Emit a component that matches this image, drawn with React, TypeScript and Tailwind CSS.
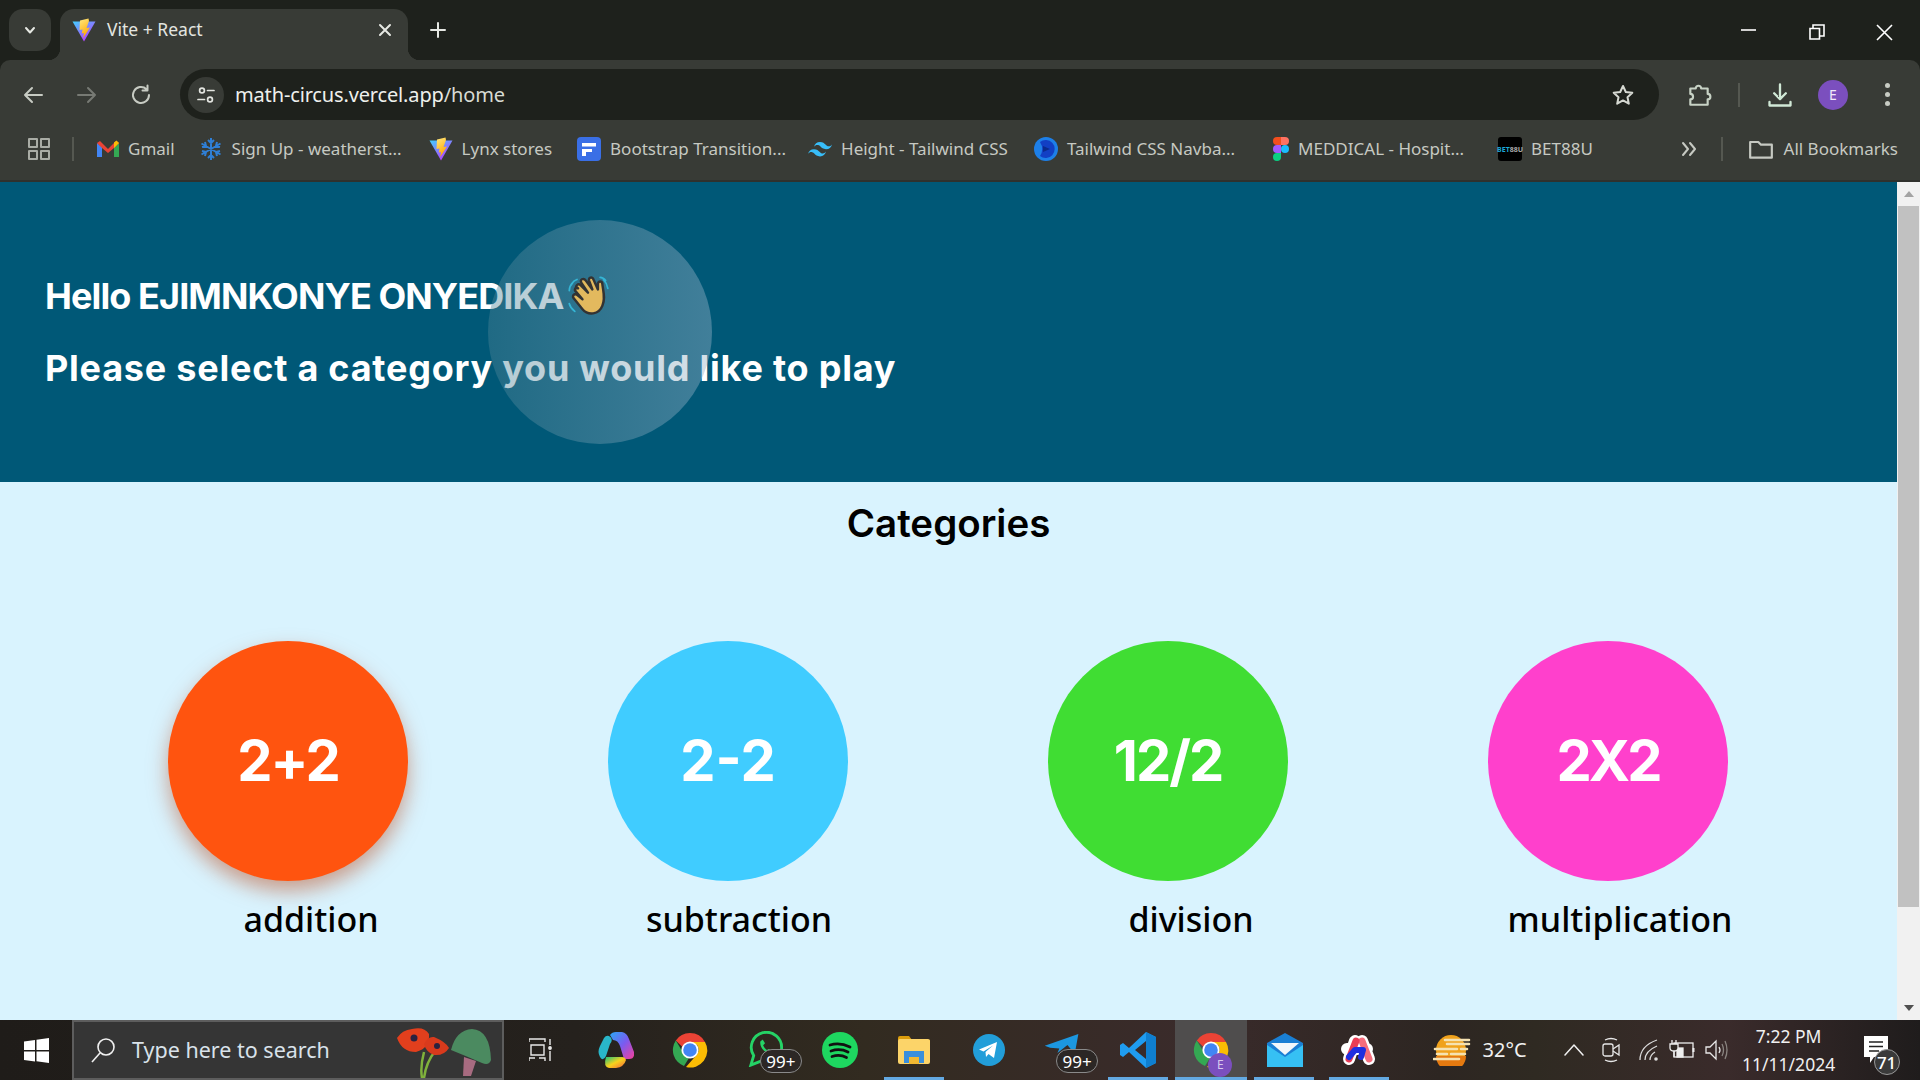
import React from "react";

const UI = "font-['Noto_Sans','Open_Sans',sans-serif]";
const HERO = "font-['Inter',sans-serif]";

function Vite({ size = 24 }: { size?: number }) {
  return (
    <svg width={size} height={size} viewBox="0 0 24 24" className="shrink-0">
      <defs>
        <linearGradient id="vg1" x1="0" y1="0" x2="0.7" y2="1">
          <stop offset="0" stopColor="#41d1ff" />
          <stop offset="1" stopColor="#bd34fe" />
        </linearGradient>
        <linearGradient id="vg2" x1="0" y1="0" x2="0.4" y2="1">
          <stop offset="0" stopColor="#ffea83" />
          <stop offset="1" stopColor="#ffa800" />
        </linearGradient>
      </defs>
      <path d="M0.5 3.5 L23.5 3.5 L12 23.5 Z" fill="url(#vg1)" />
      <path d="M16.5 0.5 L8 2.5 L7.5 12 L10.5 11.5 L9.8 15.5 L12 15 L11.2 20 L18 9.5 L14.5 10 L17 3 Z" fill="url(#vg2)" />
    </svg>
  );
}

function Chevron() {
  return (
    <svg width="14" height="14" viewBox="0 0 14 14" fill="none" stroke="#e6e8e3" strokeWidth="2" strokeLinecap="round" strokeLinejoin="round">
      <path d="M3 5 L7 9.5 L11 5" />
    </svg>
  );
}

function Stroke({ w = 24, h = 24, vb = "0 0 24 24", color = "#c7cbc3", sw = 2, children }: { w?: number; h?: number; vb?: string; color?: string; sw?: number; children: React.ReactNode }) {
  return (
    <svg width={w} height={h} viewBox={vb} fill="none" stroke={color} strokeWidth={sw} strokeLinecap="round" strokeLinejoin="round" className="shrink-0">
      {children}
    </svg>
  );
}

function ChromeLogo({ size = 36 }: { size?: number }) {
  return (
    <svg width={size} height={size} viewBox="0 0 36 36" className="shrink-0">
      <path d="M18 1 A17 17 0 0 1 33 10 L18 10 A8 8 0 0 0 10.5 15 L3.8 8.5 A17 17 0 0 1 18 1Z" fill="#ea4335" />
      <path d="M3.8 8.5 L11 20.5 A8 8 0 0 0 17 26 L12 34 A17 17 0 0 1 3.8 8.5Z" fill="#34a853" />
      <path d="M33 10 A17 17 0 0 1 14 35 L24.5 23 A8 8 0 0 0 25 13 L18 10Z" fill="#fbbc04" />
      <circle cx="18" cy="18" r="8.6" fill="#fff" />
      <circle cx="18" cy="18" r="6.8" fill="#4285f4" />
    </svg>
  );
}

function Gmail() {
  return (
    <svg width="22" height="18" viewBox="0 0 22 18" className="shrink-0">
      <path d="M0 3 L0 17 L5 17 L5 7Z" fill="#4285f4" />
      <path d="M22 3 L22 17 L17 17 L17 7Z" fill="#34a853" />
      <path d="M0 3 L3 1 L11 9 L19 1 L22 3 L17 8 L11 13 L5 8Z" fill="#ea4335" />
      <path d="M17 2.5 L19.5 0.6 L22 3 L17 8Z" fill="#fbbc04" />
    </svg>
  );
}

function Snow() {
  return (
    <svg width="24" height="24" viewBox="0 0 24 24" fill="none" stroke="#2f7fd6" strokeWidth="2" className="shrink-0">
      <path d="M12 1 V23 M2.5 6.5 L21.5 17.5 M2.5 17.5 L21.5 6.5 M9 3 L12 6 L15 3 M9 21 L12 18 L15 21 M3 10 L7 9 L6 5 M21 14 L17 15 L18 19 M3 14 L7 15 L6 19 M21 10 L17 9 L18 5" />
    </svg>
  );
}

function Bootstrap() {
  return (
    <svg width="24" height="24" viewBox="0 0 24 24" className="shrink-0">
      <rect width="24" height="24" rx="4" fill="#3a6fe6" />
      <path d="M5 6 H19 V9.5 H5Z M5 12 H15 V15 H9 V19 H5Z" fill="#fff" />
    </svg>
  );
}

function TailwindLogo() {
  return (
    <svg width="24" height="15" viewBox="0 0 24 15" fill="#38bdf8" className="shrink-0">
      <path d="M12 0 C8.8 0 6.8 1.6 6 4.8 C7.2 3.2 8.6 2.6 10.2 3 C11.1 3.2 11.8 3.9 12.5 4.6 C13.7 5.8 15 7.2 18 7.2 C21.2 7.2 23.2 5.6 24 2.4 C22.8 4 21.4 4.6 19.8 4.2 C18.9 4 18.2 3.3 17.5 2.6 C16.3 1.4 15 0 12 0Z" />
      <path d="M6 7.2 C2.8 7.2 0.8 8.8 0 12 C1.2 10.4 2.6 9.8 4.2 10.2 C5.1 10.4 5.8 11.1 6.5 11.8 C7.7 13 9 14.4 12 14.4 C15.2 14.4 17.2 12.8 18 9.6 C16.8 11.2 15.4 11.8 13.8 11.4 C12.9 11.2 12.2 10.5 11.5 9.8 C10.3 8.6 9 7.2 6 7.2Z" />
    </svg>
  );
}

function Navba() {
  return (
    <svg width="24" height="24" viewBox="0 0 24 24" className="shrink-0">
      <circle cx="12" cy="12" r="12" fill="#1d7fe8" />
      <path d="M6 5 A9 9 0 1 1 6 19 A13 13 0 0 0 6 5Z" fill="#123fc4" />
      <path d="M9 9 L16 12 L9 15Z" fill="#0b2a8c" />
    </svg>
  );
}

function Figma() {
  return (
    <svg width="16" height="24" viewBox="0 0 16 24" className="shrink-0">
      <path d="M8 0 H4 A4 4 0 0 0 4 8 H8Z" fill="#f24e1e" />
      <path d="M8 0 H12 A4 4 0 0 1 12 8 H8Z" fill="#ff7262" />
      <path d="M8 8 H4 A4 4 0 0 0 4 16 H8Z" fill="#a259ff" />
      <circle cx="12" cy="12" r="4" fill="#1abcfe" />
      <path d="M8 16 H4 A4 4 0 1 0 8 20Z" fill="#0acf83" />
    </svg>
  );
}

function Bet() {
  return (
    <div className="flex h-6 w-6 shrink-0 items-center justify-center rounded-[3px] bg-black text-[7px] font-bold leading-none">
      <span className="text-[#1aa7d8]">BET</span>
      <span className="text-[#aaaaaa]">88U</span>
    </div>
  );
}

function Bookmark({ icon, label, cls }: { icon: React.ReactNode; label: string; cls: string }) {
  return (
    <div className={`flex items-center gap-[9px] ${cls}`}>
      {icon}
      <span className="whitespace-nowrap">{label}</span>
    </div>
  );
}

function Hand() {
  return (
    <svg width="44" height="44" viewBox="0 0 40 40" className="relative z-10 -ml-[2px] shrink-0">
      <path d="M6 8 Q3 11 3 15 M10 5 Q7 6 5 9 M8 34 Q4 31 3 27 M34 5 Q37 8 38 13 M31 3 Q34 3 36 6" fill="none" stroke="#35b5d5" strokeWidth="1.6" strokeLinecap="round" />
      <path d="M10 13 C8 11 11 8 13 10 L20 17 L14 8 C12 5 16 3 18 6 L24 14 L21 6 C20 3 24 2 25 5 L29 14 L29 9 C29 6 33 6 33 9 C34 17 36 22 33 29 C30 37 20 38 15 32 L7 22 C5 20 8 17 10 19 L15 23 L9 16 C7 14 9 11 11 13 Z" fill="#e3b95e" stroke="#333333" strokeWidth="2.2" strokeLinejoin="round" />
    </svg>
  );
}

function Badge99({ cls }: { cls: string }) {
  return (
    <span className={`absolute top-[29px] flex h-[24px] w-[42px] items-center justify-center rounded-full border border-[#8a8a8a] bg-[#2c2725] text-[17px] leading-none text-white ${cls}`}>
      99+
    </span>
  );
}

function Cell({ children, bar }: { children: React.ReactNode; bar?: boolean }) {
  return (
    <div className="relative flex h-[60px] w-[74.6px] items-center justify-center">
      {children}
      {bar ? <span className="absolute bottom-0 left-[7px] h-[3px] w-[60px] bg-[#63a9e2]" /> : null}
    </div>
  );
}

function Circle({ color, text, label, offset, shadow, track }: { color: string; text: string; label: string; offset: string; shadow?: string; track: string }) {
  return (
    <div className="flex w-[240px] flex-col items-center">
      <div className={`flex h-[240px] w-[240px] items-center justify-center rounded-full ${color} ${shadow ?? ""}`}>
        <span className={`${HERO} text-[56px] font-bold leading-none text-white ${track}`}>{text}</span>
      </div>
      <span className={`${UI} mt-[15px] whitespace-nowrap text-[34px] font-medium leading-[46px] text-black ${offset}`}>{label}</span>
    </div>
  );
}

export default function App() {
  return (
    <div className={`${UI} flex h-[1080px] w-[1920px] flex-col overflow-hidden bg-[#1e211c]`}>
      {/* Tab strip */}
      <div className="flex h-[60px] shrink-0 items-end bg-[#1e211c]">
        <div className="ml-[9px] mt-[9px] flex h-[42px] w-[42px] items-center justify-center self-start rounded-[14px] bg-[#383b36]">
          <Chevron />
        </div>
        <div className="relative ml-[9px] flex h-[51px] w-[348px] items-center rounded-t-[14px] bg-[#383b36] pb-[10px] pl-[12px] pr-[16px]">
          <Vite />
          <span className="ml-[11px] text-[17.5px] text-[#e3e5e0]">Vite + React</span>
          <svg width="14" height="14" viewBox="0 0 14 14" stroke="#e6e8e3" strokeWidth="2" strokeLinecap="round" className="ml-auto">
            <path d="M2 2 L12 12 M12 2 L2 12" />
          </svg>
          <span className="absolute bottom-0 left-[-12px] h-[12px] w-[12px] bg-[radial-gradient(circle_at_top_left,transparent_12px,#383b36_12.5px)]" />
          <span className="absolute bottom-0 right-[-12px] h-[12px] w-[12px] bg-[radial-gradient(circle_at_top_right,transparent_12px,#383b36_12.5px)]" />
        </div>
        <div className="mb-[21px] ml-[21px]">
          <svg width="18" height="18" viewBox="0 0 18 18" stroke="#e6e8e3" strokeWidth="2" strokeLinecap="round">
            <path d="M9 2 V16 M2 9 H16" />
          </svg>
        </div>
        <div className="ml-auto flex h-full items-start pr-[27px] pt-[24px]">
          <svg width="16" height="16" viewBox="0 0 16 16" stroke="#fff" strokeWidth="1.6">
            <path d="M1 6 H16" />
          </svg>
          <svg width="16" height="16" viewBox="0 0 16 16" fill="none" stroke="#fff" strokeWidth="1.6" className="ml-[53px]">
            <path d="M1 4.5 H10.5 V15 H1Z M4 4 V1 H15 V12 H11" />
          </svg>
          <svg width="17" height="17" viewBox="0 0 17 17" stroke="#fff" strokeWidth="1.6" className="ml-[51px]">
            <path d="M1 1 L16 16 M16 1 L1 16" />
          </svg>
        </div>
      </div>

      {/* Toolbar */}
      <div className="flex h-[60px] shrink-0 items-start rounded-t-[10px] bg-[#383b36] pt-[9px]">
        <div className="flex h-[51px] w-[180px] shrink-0 items-center pl-[21px]">
          <Stroke w={24} h={24}>
            <path d="M21 12 H4 M11 5 L4 12 L11 19" />
          </Stroke>
          <span className="ml-[30px]">
            <Stroke w={24} h={24} color="#777a74">
              <path d="M3 12 H20 M13 5 L20 12 L13 19" />
            </Stroke>
          </span>
          <span className="ml-[30px]">
            <Stroke w={24} h={24}>
              <path d="M20 12 A8 8 0 1 1 17.5 6.2 M18.5 2.5 V7.5 H13.5" />
            </Stroke>
          </span>
        </div>
        <div className="flex h-[51px] w-[1479px] items-center rounded-full bg-[#1e211c] pl-[8px] pr-[24px]">
          <div className="flex h-[36px] w-[36px] items-center justify-center rounded-full bg-[#383b36]">
            <Stroke w={20} h={20} vb="0 0 20 20" color="#e3e5e0" sw={1.7}>
              <circle cx="6" cy="5.5" r="2.4" />
              <path d="M11.5 5.5 H18 M2 14.5 H8.5" />
              <circle cx="14" cy="14.5" r="2.4" />
            </Stroke>
          </div>
          <span className="ml-[11px] text-[20px] tracking-[-0.15px] text-[#d8dbd4]">
            <span className="text-[#eef0ec]">math-circus.vercel.app</span>/home
          </span>
          <span className="ml-auto">
            <Stroke w={24} h={24} color="#d6d9d2">
              <path d="M12 3 L14.8 9 L21.3 9.8 L16.5 14.2 L17.8 20.7 L12 17.4 L6.2 20.7 L7.5 14.2 L2.7 9.8 L9.2 9 Z" />
            </Stroke>
          </span>
        </div>
        <div className="flex h-[51px] flex-1 items-center pl-[27px]">
          <Stroke w={26} h={26} color="#c7d2c5">
            <path d="M4 6 H9 A2.5 2.5 0 1 1 14 6 H20 V11 A2.5 2.5 0 1 1 20 16 V21 H4 V16 A2.5 2.5 0 0 0 4 11 Z" />
          </Stroke>
          <span className="ml-[26px] h-[24px] w-[2px] bg-[#555851]" />
          <span className="ml-[26px]">
            <Stroke w={28} h={28} color="#d0e8d6">
              <path d="M12 3 V15 M7 10.5 L12 15.5 L17 10.5 M3 18 V21 H21 V18" />
            </Stroke>
          </span>
          <span className="ml-[24px] flex h-[30px] w-[30px] items-center justify-center rounded-full bg-[#7b4fbe] text-[14px] text-[#f0e8fa]">E</span>
          <span className="ml-[37px] flex flex-col gap-[4px]">
            <span className="h-[5px] w-[5px] rounded-full bg-[#c7cbc3]" />
            <span className="h-[5px] w-[5px] rounded-full bg-[#c7cbc3]" />
            <span className="h-[5px] w-[5px] rounded-full bg-[#c7cbc3]" />
          </span>
        </div>
      </div>

      {/* Bookmarks */}
      <div className="flex h-[62px] shrink-0 items-center border-b-[2px] border-[#2f312d] bg-[#383b36] pb-[2px] text-[17px] text-[#c6c9c2]">
        <div className="ml-[28px]">
          <Stroke w={22} h={22} vb="0 0 22 22" sw={2} color="#a9aca5">
            <rect x="1" y="1" width="8" height="8" />
            <rect x="13" y="1" width="8" height="8" />
            <rect x="1" y="13" width="8" height="8" />
            <rect x="13" y="13" width="8" height="8" />
          </Stroke>
        </div>
        <span className="ml-[22px] h-[24px] w-[2px] bg-[#555851]" />
        <Bookmark cls="ml-[23px]" icon={<Gmail />} label="Gmail" />
        <Bookmark cls="ml-[24px]" icon={<Snow />} label="Sign Up - weatherst..." />
        <Bookmark cls="ml-[27px]" icon={<Vite />} label="Lynx stores" />
        <Bookmark cls="ml-[25px]" icon={<Bootstrap />} label="Bootstrap Transition..." />
        <Bookmark cls="ml-[22px]" icon={<TailwindLogo />} label="Height - Tailwind CSS" />
        <Bookmark cls="ml-[26px]" icon={<Navba />} label="Tailwind CSS Navba..." />
        <Bookmark cls="ml-[38px]" icon={<Figma />} label="MEDDICAL - Hospit..." />
        <Bookmark cls="ml-[34px]" icon={<Bet />} label="BET88U" />
        <div className="ml-auto flex items-center pr-[22px]">
          <Stroke w={18} h={18} vb="0 0 18 18" color="#c6c9c2">
            <path d="M3 3 L8 9 L3 15 M10 3 L15 9 L10 15" />
          </Stroke>
          <span className="ml-[23px] h-[24px] w-[2px] bg-[#555851]" />
          <span className="ml-[25px]">
            <Stroke w={26} h={26} color="#c6c9c2">
              <path d="M2 5.5 H9.5 L12 8 H22 V20 H2 Z" />
            </Stroke>
          </span>
          <span className="ml-[10px] whitespace-nowrap">All Bookmarks</span>
        </div>
      </div>

      {/* Page */}
      <div className="flex min-h-0 flex-1">
        <main className="flex min-w-0 flex-1 flex-col bg-[#d9f3fe]">
          <section className={`${HERO} relative flex h-[300px] shrink-0 flex-col justify-center gap-[24px] bg-[#005877] pl-[45px] text-[36px] font-bold leading-[48px] text-white`}>
            <div className="flex h-[48px] items-center gap-[4px]">
              <span className="tracking-[-0.9px]">Hello EJIMNKONYE ONYEDIKA</span>
              <Hand />
            </div>
            <div className="tracking-[0.77px]">Please select a category you would like to play</div>
            <div className="absolute left-[488px] top-[38px] h-[224px] w-[224px] rounded-full bg-[linear-gradient(90deg,rgba(76,131,150,0.42),rgba(155,181,202,0.42))]" />
          </section>
          <h1 className={`${HERO} mt-[17px] text-center text-[38.5px] font-semibold leading-[48px] text-black`}>Categories</h1>
          <div className="mt-[94px] flex gap-[200px] pl-[168px]">
            <Circle color="bg-[#ff540f]" text="2+2" track="tracking-[-2px]" label="addition" offset="pl-[46px]" shadow="shadow-[0_10px_20px_rgba(190,90,50,0.55)]" />
            <Circle color="bg-[#40ccff]" text="2-2" track="tracking-normal" label="subtraction" offset="pl-[22px]" />
            <Circle color="bg-[#40dd33]" text="12/2" track="tracking-[-2px]" label="division" offset="pl-[46px]" />
            <Circle color="bg-[#ff40cc]" text="2X2" track="tracking-[-3px]" label="multiplication" offset="pl-[24px]" />
          </div>
        </main>
        <aside className="flex w-[23px] shrink-0 flex-col items-center bg-[#f1f1f1]">
          <span className="mt-[9px] h-0 w-0 border-x-[5px] border-b-[6px] border-x-transparent border-b-[#a3a3a3]" />
          <span className="mt-[9px] h-[701px] w-[21px] bg-[#c1c1c1]" />
          <span className="mb-[9px] mt-auto h-0 w-0 border-x-[5px] border-t-[6px] border-x-transparent border-t-[#505050]" />
        </aside>
      </div>

      {/* Taskbar */}
      <footer className="flex h-[60px] shrink-0 items-center bg-[linear-gradient(90deg,#1f1c19_0%,#25211d_30%,#322b20_45%,#3a2b2b_62%,#2d2622_75%,#2f2a22_80%,#3a2b2b_90%,#1f1c1c_100%)] text-white">
        <div className="flex w-[72px] justify-center">
          <svg width="25" height="25" viewBox="0 0 25 25" fill="#fff">
            <path d="M0 3.5 L11 2 V12 H0Z M12.5 1.8 L25 0 V12 H12.5Z M0 13.5 H11 V23.5 L0 22Z M12.5 13.5 H25 V25 L12.5 23.3Z" />
          </svg>
        </div>
        <div className="flex h-[60px] w-[432px] items-center border-2 border-[#5d5d5d] bg-[#353535] pl-[16px]">
          <svg width="26" height="26" viewBox="0 0 26 26" fill="none" stroke="#f0f0f0" strokeWidth="1.6">
            <circle cx="16" cy="10" r="8" />
            <path d="M10 16 L2 25" />
          </svg>
          <span className="ml-[16px] text-[21.5px] leading-none text-[#d9e2ea]">Type here to search</span>
          <svg width="96" height="56" viewBox="0 0 96 56" className="ml-auto mr-[10px] self-end">
            <path d="M28 30 Q24 45 26 56 M28 56 Q30 40 40 28" fill="none" stroke="#7fb13c" strokeWidth="2.5" />
            <path d="M1 16 Q6 8 16 7 Q28 4 33 12 Q34 26 20 30 Q6 30 1 16Z" fill="#e23f1d" />
            <circle cx="18" cy="16" r="3.5" fill="#2a2240" />
            <path d="M28 22 Q32 14 38 15 Q50 20 53 26 Q48 34 38 33 Q30 30 28 22Z" fill="#d93a1c" />
            <circle cx="41" cy="24" r="3" fill="#2a2240" />
            <path d="M55 28 Q60 8 76 7 Q94 8 95 38 Q93 44 86 41 Q70 34 55 28Z" fill="#4b8a60" />
            <path d="M68 35 L80 39 L75 54 L67 54Z" fill="#a76b80" />
          </svg>
        </div>
        <div className="flex">
          <Cell>
            <svg width="24" height="24" viewBox="0 0 24 24" fill="none" stroke="#e8e8e8" strokeWidth="1.4">
              <path d="M0 4 V1 H16 V4 M2 7 H15 V17 H2Z M0 23 V20 H6 M10 20 H16 V23 M21 1 V7 M21 13 V23" />
              <circle cx="21" cy="10" r="1.2" fill="#e8e8e8" />
            </svg>
          </Cell>
          <Cell>
            <svg width="36" height="36" viewBox="0 0 36 36">
              <defs>
                <linearGradient id="cp1" x1="0" y1="0" x2="1" y2="1">
                  <stop offset="0" stopColor="#2aa7f5" />
                  <stop offset="0.5" stopColor="#7a5bf0" />
                  <stop offset="1" stopColor="#f5409a" />
                </linearGradient>
                <linearGradient id="cp2" x1="0" y1="0" x2="1" y2="1">
                  <stop offset="0" stopColor="#19c37d" />
                  <stop offset="0.5" stopColor="#f7d21c" />
                  <stop offset="1" stopColor="#f2603c" />
                </linearGradient>
              </defs>
              <path d="M12 3 Q14 0 18 0 H24 Q29 1 31 7 L36 20 Q37 27 31 27 H26 L22 14 Q20 8 15 8 L12 3Z" fill="url(#cp1)" />
              <path d="M11 4 Q16 7 12 12 L8 24 Q5 30 2 25 Q-1 20 2 14 L6 6 Q8 3 11 4Z" fill="#29b6c9" />
              <path d="M8 25 H24 Q27 25 28 28 Q26 35 18 36 H11 Q5 35 8 25Z" fill="url(#cp2)" />
            </svg>
          </Cell>
          <Cell>
            <ChromeLogo />
          </Cell>
          <Cell>
            <svg width="36" height="36" viewBox="0 0 38 38" fill="none" className="-translate-y-[1px] translate-x-[1px]">
              <path d="M3 36 L6 26 A16 16 0 1 1 13 32Z" stroke="#25d366" strokeWidth="3" />
              <path d="M13 11 C12 17 18 24 25 25 L27 21 L22 19 L20 20 C18 19 17 17 16 15 L18 13 L15.5 9Z" fill="#25d366" />
            </svg>
            <Badge99 cls="left-[32px]" />
          </Cell>
          <Cell>
            <svg width="36" height="36" viewBox="0 0 36 36">
              <circle cx="18" cy="18" r="18" fill="#1ed760" />
              <path d="M8 13 Q18 10 28 15 M9 19 Q18 16 26 20 M10 24.5 Q18 22 24.5 25.5" fill="none" stroke="#111" strokeWidth="2.8" strokeLinecap="round" />
            </svg>
          </Cell>
          <Cell bar>
            <svg width="32" height="28" viewBox="0 0 32 28">
              <path d="M0 2 Q0 0 2 0 H11 L14 4 H32 V10 H0Z" fill="#dc9d0c" />
              <rect y="3" width="32" height="25" rx="2" fill="#fcd469" />
              <path d="M6 27 V15 H26 V27 H21 V21 H11 V27Z" fill="#3a8fdc" />
              <rect x="11" y="21" width="10" height="7" fill="#f2b932" />
            </svg>
          </Cell>
          <Cell>
            <svg width="32" height="32" viewBox="0 0 32 32">
              <circle cx="16" cy="16" r="16" fill="#229ed9" />
              <path d="M6 15.5 L24 8 L21 24 L15.5 20 L13 23 L12.5 18 L20 11.5 L10.5 17.5Z" fill="#fff" />
            </svg>
          </Cell>
          <Cell>
            <svg width="36" height="20" viewBox="0 0 38 22" className="-translate-y-[6px] translate-x-[-1px]">
              <path d="M0 13 L37 0 L33 22 L25 12 L14 21 L16 16 L6 15Z" fill="#1c97e0" />
            </svg>
            <Badge99 cls="left-[30px]" />
          </Cell>
          <Cell bar>
            <svg width="36" height="36" viewBox="0 0 36 36">
              <path d="M26 0 L36 5 V31 L26 36 L9 20 L3 25 L0 23 V13 L3 11 L9 16Z M26 9 L15 18 L26 27Z" fill="#1f9cf0" />
              <path d="M26 0 L36 5 V31 L26 36Z M26 9 L26 27" fill="#0f7fd0" />
            </svg>
          </Cell>
          <div className="relative flex h-[60px] w-[72px] items-center justify-center bg-[#4f4d4d]">
            <ChromeLogo />
            <span className="absolute left-[33px] top-[33px] flex h-[24px] w-[24px] items-center justify-center rounded-full bg-[#7b4fbe] text-[12px] text-[#d8c8ee]">E</span>
            <span className="absolute bottom-0 left-0 h-[3px] w-[72px] bg-[#63a9e2]" />
          </div>
          <Cell bar>
            <svg width="36" height="34" viewBox="0 0 36 34">
              <path d="M0 10 L18 0 L36 10 V34 H0Z" fill="#1a7fd4" />
              <path d="M4 10 H32 L18 22Z" fill="#f2f7fb" />
              <path d="M0 12 L18 24 L36 12 V34 H0Z" fill="#36c0f4" />
            </svg>
          </Cell>
          <Cell bar>
            <svg width="36" height="34" viewBox="0 0 36 34" fill="none" strokeLinecap="round" strokeLinejoin="round">
              <path d="M8 26 L14 8 M28 26 L21 8 M6 16 H26" stroke="#ffffff" strokeWidth="12" />
              <path d="M21 8 L28 26" stroke="#f56d7c" strokeWidth="7" />
              <path d="M15 8 L8 26" stroke="#ea3d55" strokeWidth="7" />
              <path d="M8 24 L14 17 H22 L20 24" stroke="#1f2fe0" strokeWidth="6" />
            </svg>
          </Cell>
        </div>

        <div className="ml-[36px] flex items-center">
          <svg width="38" height="32" viewBox="0 0 38 32">
            <circle cx="18" cy="16" r="15" fill="#f0a21c" />
            <path d="M3 22 A15 15 0 0 0 33 22Z" fill="#e57a10" />
            <path d="M12 6 H36 M14 10 H36 M2 15 H24 M28 15 H34 M4 20 H14 M18 20 H32 M1 25 H26" stroke="#f5e2b2" strokeWidth="2.6" strokeLinecap="round" />
          </svg>
          <span className="ml-[12px] text-[20px] text-[#f0f0f0]">32°C</span>
        </div>
        <div className="ml-[37px]">
          <Stroke w={20} h={14} vb="0 0 20 14" color="#f0f0f0" sw={1.5}>
            <path d="M1 12 L10 2 L19 12" />
          </Stroke>
        </div>
        <div className="ml-[18px]">
          <svg width="18" height="26" viewBox="0 0 18 26" fill="none" stroke="#e8e8e8" strokeWidth="1.3">
            <rect x="1" y="7" width="10" height="12" rx="2" />
            <path d="M11 12 L17 8 V18 L11 14 M3 3 Q9 0 15 3 M3 23 Q9 26 15 23" />
          </svg>
        </div>
        <div className="ml-[19px]">
          <svg width="20" height="24" viewBox="0 0 20 24" fill="none" stroke="#dcdcdc" strokeWidth="1.3">
            <path d="M1 22 Q1 8 18 2 M6 22 Q6 13 18 8 M11 22 Q11 17 16 14" />
            <circle cx="17" cy="21" r="1.8" fill="#dcdcdc" stroke="none" />
          </svg>
        </div>
        <div className="ml-[10px]">
          <svg width="26" height="22" viewBox="0 0 26 22" fill="none" stroke="#eeeeee" strokeWidth="1.3">
            <rect x="5" y="4" width="19" height="14" />
            <path d="M24.5 9 V13" strokeWidth="2" />
            <rect x="8" y="9" width="6" height="9" fill="#eeeeee" />
            <path d="M1 5 H9 V9 Q9 12 5 12 Q1 12 1 9Z M3 1 V5 M7 1 V5 M5 12 V18" fill="#2d2622" />
          </svg>
        </div>
        <div className="ml-[10px]">
          <svg width="24" height="22" viewBox="0 0 24 22" fill="none" stroke="#e8e8e8" strokeWidth="1.3">
            <path d="M1 8 H5 L11 2 V20 L5 14 H1Z M14 8 Q16 11 14 14" />
            <path d="M17 5 Q20 11 17 17 M20 2 Q24 11 20 20" stroke="#8a8480" />
          </svg>
        </div>
        <div className="ml-[12px] flex w-[96px] flex-col items-center text-[17.5px] leading-[28px] text-[#f0f0f0]">
          <span className="whitespace-nowrap">7:22 PM</span>
          <span className="whitespace-nowrap">11/11/2024</span>
        </div>
        <div className="relative ml-[27px]">
          <svg width="26" height="28" viewBox="0 0 26 28">
            <path d="M0 0 H24 V21 H10 L6 27 V21 H0Z" fill="#fff" />
            <path d="M5 6 H19 M5 10.5 H19 M5 15 H15" stroke="#222" strokeWidth="1.6" />
          </svg>
          <span className="absolute left-[10px] top-[13px] flex h-[26px] w-[26px] items-center justify-center rounded-full border border-[#999] bg-[#3a3a3a] text-[17px] font-medium leading-none text-white">71</span>
        </div>
      </footer>
    </div>
  );
}
